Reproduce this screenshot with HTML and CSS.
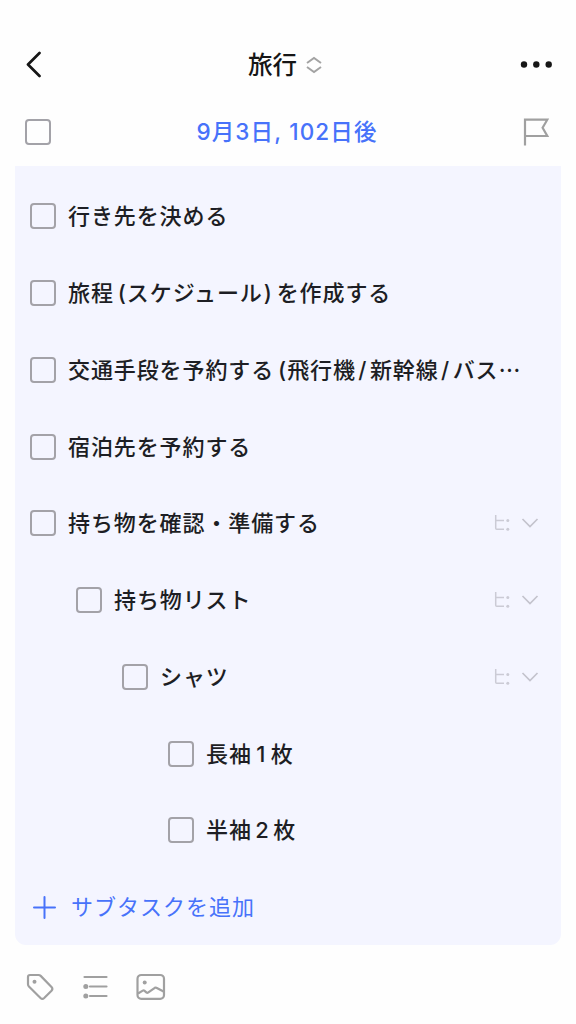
FILE: index.html
```html
<!DOCTYPE html>
<html lang="ja">
<head>
<meta charset="utf-8">
<title>旅行</title>
<link rel="stylesheet" href="styles.css">
</head>
<body>
<svg class="defs" width="0" height="0">
  <symbol id="tree" viewBox="0 0 16 18"><path d="M1.700 1v13.200q0 1 1 1H10M1.700 6.500H10" fill="none" stroke="currentColor" stroke-width="1.500"/><circle cx="13.800" cy="6.500" r="1.500" fill="currentColor"/><circle cx="13.800" cy="15.200" r="1.500" fill="currentColor"/></symbol>
  <symbol id="chevron" viewBox="0 0 18 12"><path d="M1.500 2 9 9.500 16.500 2" fill="none" stroke="currentColor" stroke-width="1.700"/></symbol>
</svg>
<header class="nav">
  <svg class="back" width="18" height="28" viewBox="0 0 18 28"><path d="M16.500 3 5 14.500 16.500 26" fill="none" stroke="currentColor" stroke-width="2.700" stroke-linecap="round" stroke-linejoin="round"/></svg>
  <h1 class="title">旅行<svg class="sort" width="16" height="18" viewBox="0 0 16 18"><path d="M1 7 8 2l7 5M1 11l7 5 7-5" fill="none" stroke="currentColor" stroke-width="2"/></svg></h1>
  <svg class="more" width="34" height="8" viewBox="0 0 34 8"><circle cx="4" cy="4.500" r="3.200"/><circle cx="16.300" cy="4.500" r="3.200"/><circle cx="28.700" cy="4.500" r="3.200"/></svg>
</header>
<section class="date-row">
  <span class="box"></span>
  <p class="date">9月3日, 102日後</p>
  <svg class="flag" width="28" height="30" viewBox="0 0 28 30"><path d="M2 1.500V28.500M2 2.700H24.300L19.600 10.800 24.300 19H2" fill="none" stroke="currentColor" stroke-width="2.200"/></svg>
</section>
<main class="panel">
  <ul class="tasks">
    <li class="task"><span class="box"></span><span class="label">行き先を決める</span></li>
    <li class="task"><span class="box"></span><span class="label">旅程<span class="open">(</span>スケジュール<span class="close">)</span>を作成する</span></li>
    <li class="task"><span class="box"></span><span class="label">交通手段を予約する<span class="open">(</span>飛行機<span class="slash">/</span>新幹線<span class="slash">/</span>バス<span class="dots">…</span></span></li>
    <li class="task"><span class="box"></span><span class="label">宿泊先を予約する</span></li>
    <li class="task"><span class="box"></span><span class="label">持ち物を確認・準備する</span><svg class="tree"><use href="#tree"/></svg><svg class="chevron"><use href="#chevron"/></svg></li>
    <li class="task level-1"><span class="box"></span><span class="label">持ち物リスト</span><svg class="tree"><use href="#tree"/></svg><svg class="chevron"><use href="#chevron"/></svg></li>
    <li class="task level-2"><span class="box"></span><span class="label">シャツ</span><svg class="tree"><use href="#tree"/></svg><svg class="chevron"><use href="#chevron"/></svg></li>
    <li class="task level-3"><span class="box"></span><span class="label">長袖<span class="num narrow">1</span>枚</span></li>
    <li class="task level-3"><span class="box"></span><span class="label">半袖<span class="num">2</span>枚</span></li>
  </ul>
  <div class="add"><svg width="23" height="23" viewBox="0 0 23 23"><path d="M11.500 1v21M1 11.500h21" stroke="currentColor" stroke-width="2" stroke-linecap="round"/></svg><span class="add-label">サブタスクを追加</span></div>
</main>
<footer class="tools">
  <svg width="28" height="28" viewBox="0 0 28 28"><path d="M4 2h8.500q1.300 0 2.200.9L25.500 14q1.700 1.900 0 3.700L18.200 25q-1.900 1.700-3.700 0L2.900 13.500Q2 12.600 2 11.300V4Q2 2 4 2z" fill="none" stroke="currentColor" stroke-width="2.200"/><circle cx="8.500" cy="8.800" r="2" fill="currentColor"/></svg>
  <svg width="28" height="28" viewBox="0 0 28 28"><path d="M3.500 4h22M9 13.500h16.500M9 23h16.500" stroke="currentColor" stroke-width="2.200" stroke-linecap="round"/><circle cx="4.800" cy="13.500" r="2.500" fill="currentColor"/><circle cx="4.800" cy="23" r="2.500" fill="currentColor"/></svg>
  <svg width="30" height="28" viewBox="0 0 30 28"><rect x="1.500" y="2" width="26.500" height="23.800" rx="3.800" fill="none" stroke="currentColor" stroke-width="2.200"/><path d="M2 20.500 6.800 17.600q.8-.5 1.500.1l2.300 2q.7.500 1.400 0l6.800-4.900q.8-.5 1.600 0L28 18.800" fill="none" stroke="currentColor" stroke-width="2.200"/><circle cx="8.700" cy="9.500" r="2" fill="currentColor"/></svg>
</footer>
</body>
</html>
```
FILE: styles.css
```css
* { box-sizing: border-box; }
body {
  margin: 0;
  height: 1024px;
  overflow: hidden;
  background: #fefefe;
  color: #1d1e24;
  font-family: Inter, "Noto Sans CJK JP", sans-serif;
}
svg { display: block; flex: none; }
.defs { position: absolute; }
.nav {
  display: grid;
  grid-template-columns: 1fr auto 1fr;
  align-items: center;
  height: 64px;
  margin-top: 32px;
  padding: 0 22px 0 23px;
  color: #161616;
}
.title {
  display: flex;
  align-items: center;
  gap: 9px;
  margin: 0;
  padding: 2px 7px 0 0;
  font-size: 24.5px;
  font-weight: 500;
  line-height: 36px;
}
.sort { color: #a3a3a3; margin-top: -1px; }
.more { justify-self: end; fill: currentColor; }
.date-row {
  display: flex;
  align-items: center;
  justify-content: space-between;
  height: 70px;
  padding: 1px 25px 0;
}
.date {
  margin: 0;
  color: #4772fa;
  font-size: 22.5px;
  font-weight: 500;
  letter-spacing: 1.15px;
  line-height: 34px;
}
.flag { color: #a0a0a0; }
.box {
  flex: none;
  width: 26px;
  height: 26px;
  border: 2px solid #a3a2a8;
  border-radius: 4px;
}
.panel {
  height: 779px;
  margin: 0 15px;
  padding: 12px 15px 0;
  border-radius: 0 0 11px 11px;
  background: #f4f5ff;
}
.tasks { margin: 0; padding: 0; list-style: none; }
.task { display: flex; align-items: center; height: 76.75px; padding-right: 7px; }
.level-1 { padding-left: 46px; }
.level-2 { padding-left: 92px; }
.level-3 { padding-left: 138px; }
.label {
  flex: 1;
  margin-left: 12px;
  font-size: 22px;
  font-weight: 500;
  letter-spacing: 0.9px;
  line-height: 34px;
  white-space: nowrap;
}
.open { margin-left: 4px; }
.close { margin: 0 4px 0 1px; }
.slash { margin: 0 2.5px; }
.dots { font-family: "Noto Sans CJK JP", sans-serif; line-height: 1; }
.num { margin: 0 3.5px; }
.narrow { margin: 0 4.5px; }
.tree { width: 16px; height: 18px; margin-right: 11px; color: #cbcbd5; }
.chevron { width: 18px; height: 12px; color: #c3c3cd; }
.add { display: flex; align-items: center; height: 77px; padding-left: 3px; color: #4772fa; }
.add-label { margin-left: 15px; font-size: 22px; letter-spacing: 1px; line-height: 34px; }
.tools { display: flex; gap: 27px; padding: 28px 26px 0; color: #a0a0a0; }
```
